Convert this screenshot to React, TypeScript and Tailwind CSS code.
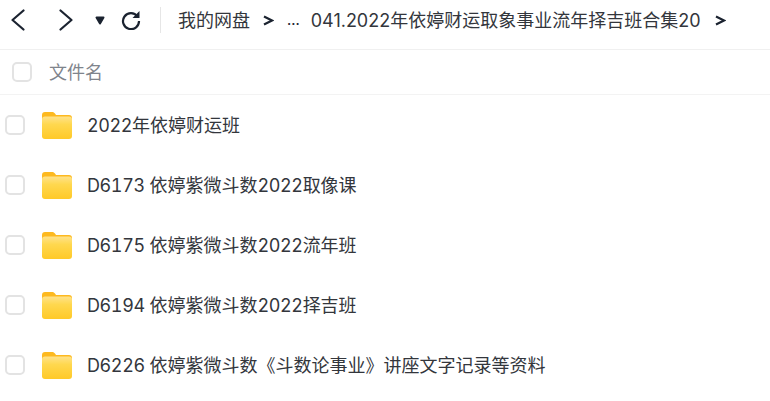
const files = [
  "2022年依婷财运班",
  "D6173 依婷紫微斗数2022取像课",
  "D6175 依婷紫微斗数2022流年班",
  "D6194 依婷紫微斗数2022择吉班",
  "D6226 依婷紫微斗数《斗数论事业》讲座文字记录等资料",
];

function Chevron({ dir }: { dir: "left" | "right" }) {
  return (
    <svg width="16" height="22" viewBox="0 0 16 22" fill="none" stroke="#1b2330" strokeWidth="2.200" strokeLinecap="round" strokeLinejoin="round">
      <path d={dir === "left" ? "M13.500 1.500 2.500 11l11 9.500" : "M2.500 1.500 13.500 11 2.500 20.500"} />
    </svg>
  );
}

function Crumb() {
  return (
    <svg width="11" height="11" viewBox="0 0 11 11" fill="none" stroke="#1b2330" strokeWidth="2.200" className="shrink-0">
      <path d="M1 1.500 9 5.500 1 9.500" />
    </svg>
  );
}

function Folder() {
  return (
    <svg width="30" height="27" viewBox="0 0 30 27" className="shrink-0">
      <defs>
        <linearGradient id="fold" x1="0" y1="0" x2="0" y2="1">
          <stop offset="0" stopColor="#ffe28a" />
          <stop offset="0.35" stopColor="#ffd84f" />
          <stop offset="1" stopColor="#ffc928" />
        </linearGradient>
      </defs>
      <path d="M0 3a3 3 0 0 1 3-3h7c1.500 0 2.200.6 3 1.500L14 3h13a3 3 0 0 1 3 3v4H0z" fill="#fdb91f" />
      <rect x="0" y="4.500" width="30" height="22.500" rx="3" fill="url(#fold)" />
    </svg>
  );
}

function Check() {
  return <span className="h-[20px] w-[20px] shrink-0 rounded-[5px] border-2 border-[#e3e3e3] bg-white" />;
}

// digits run a bit wide in Inter, tighten only the latin runs
function FileName({ name }: { name: string }) {
  return (
    <span className="ml-[15px] pt-[2px] text-[18px] leading-none tabular-nums">
      {name.split(/([A-Z0-9]+)/).map((part, i) =>
        i % 2 ? <span key={i} className="tracking-[-0.4px]">{part}</span> : part
      )}
    </span>
  );
}

export default function App() {
  return (
    <div className="h-[401px] w-[770px] overflow-hidden bg-white text-[#33363c]" style={{ fontFamily: 'Inter, "Noto Sans CJK SC", sans-serif' }}>
      <div className="flex h-[50px] items-center border-b border-[#f0f0f0] pb-[9px]">
        <div className="ml-[10px]"><Chevron dir="left" /></div>
        <div className="ml-[32px]"><Chevron dir="right" /></div>
        <svg width="10" height="9" viewBox="0 0 10 9" className="ml-[21px]">
          <path d="M1.500 1.500h7L5 7.500z" fill="#1b2330" stroke="#1b2330" strokeWidth="2" strokeLinejoin="round" />
        </svg>
        <svg width="20" height="20" viewBox="0 0 20 20" fill="none" stroke="#1b2330" strokeWidth="2.200" className="ml-[16px]">
          <path d="M16.500 6.500A8 8 0 1 0 18 11" />
          <path d="M18.500 1v7h-7z" fill="#1b2330" stroke="none" />
        </svg>
        <div className="ml-[19px] h-[26px] w-px bg-[#e6e6e6]" />
        <span className="ml-[17px] pt-[1px] text-[18px] leading-none">我的网盘</span>
        <span className="ml-[13px]"><Crumb /></span>
        <span className="ml-[13px] text-[14px] font-medium leading-none text-[#1b2330]">...</span>
        <span className="ml-[11px] pt-[1px] text-[18px] leading-none">041.2022年依婷财运取象事业流年择吉班合集20</span>
        <span className="ml-[14px]"><Crumb /></span>
      </div>
      <div className="flex h-[45px] items-center border-b border-[#f3f3f3] pl-[12px]">
        <Check />
        <span className="ml-[17px] pt-[2px] text-[18px] leading-none text-[#7f848c]">文件名</span>
      </div>
      <div className="flex flex-col">
        {files.map((name) => (
          <div key={name} className="flex h-[60px] items-center pl-[5px]">
            <Check />
            <span className="ml-[17px]"><Folder /></span>
            <FileName name={name} />
          </div>
        ))}
      </div>
    </div>
  );
}
